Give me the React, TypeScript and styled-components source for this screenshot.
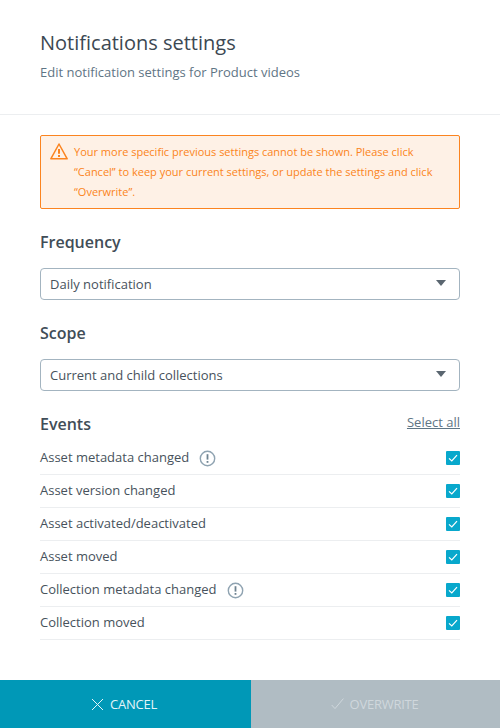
import styled, { createGlobalStyle } from 'styled-components'

const GlobalStyle = createGlobalStyle`
    html, body {
        margin: 0;
        padding: 0;
        background: #fff;
    }
    body {
        font-family: 'Open Sans', 'Liberation Sans', sans-serif;
    }
`

const Page = styled.div`
    width: 500px;
    height: 728px;
    display: flex;
    flex-direction: column;
    overflow: hidden;
`

const Header = styled.header`
    height: 114px;
    box-sizing: content-box;
    padding: 0 40px;
    border-bottom: 1px solid #eceef0;
`

const Title = styled.h1`
    margin: 0;
    padding-top: 29px;
    font-size: 20px;
    line-height: 28px;
    font-weight: 400;
    color: #3c4852;
`

const Subtitle = styled.p`
    margin: 7px 0 0;
    font-size: 13px;
    line-height: 17px;
    color: #5f7585;
`

const Body = styled.main`
    flex: 1;
    padding: 20px 40px 0;
`

const Alert = styled.div`
    display: flex;
    gap: 6px;
    box-sizing: border-box;
    height: 74px;
    padding: 6px 10px 6px 9px;
    background: #fef1e6;
    border: 1px solid #fb8420;
    border-radius: 2px;
    color: #fb8420;
    font-size: 11px;
    line-height: 20px;
`

const AlertIcon = styled.svg`
    flex: none;
    width: 18px;
    height: 18px;
    margin-top: 1px;
`

const SectionLabel = styled.h2<{ $top: number }>`
    margin: ${(p) => p.$top}px 0 0;
    font-size: 16px;
    line-height: 22px;
    font-weight: 600;
    color: #414d57;
`

const Select = styled.div`
    display: flex;
    align-items: center;
    justify-content: space-between;
    box-sizing: border-box;
    height: 32px;
    margin-top: 15px;
    padding: 0 13px 0 9px;
    border: 1px solid #a3b4c0;
    border-radius: 4px;
    font-size: 13px;
    color: #47525c;
`

const Caret = styled.span`
    width: 0;
    height: 0;
    margin-top: -3px;
    border-left: 5px solid transparent;
    border-right: 5px solid transparent;
    border-top: 6px solid #5a6670;
`

const EventsHead = styled.div`
    display: flex;
    justify-content: space-between;
    align-items: flex-start;
    margin-top: 22px;
`

const EventsLabel = styled(SectionLabel)`
    margin: 0;
`

const SelectAll = styled.a`
    font-size: 13px;
    line-height: 20px;
    margin-top: -1px;
    color: #5f7585;
    text-decoration: underline;
`

const EventList = styled.ul`
    list-style: none;
    margin: 7px 0 0;
    padding: 0;
`

const EventRow = styled.li`
    display: flex;
    align-items: center;
    box-sizing: border-box;
    height: 33px;
    border-bottom: 1px solid #eceef0;
    font-size: 13px;
    color: #47525c;
`

const EventName = styled.span`
    margin-top: -2px;
`

const InfoIcon = styled.svg`
    width: 17px;
    height: 17px;
    margin-left: 10px;
`

const Checkbox = styled.span`
    display: flex;
    align-items: center;
    justify-content: center;
    width: 14px;
    height: 14px;
    margin-left: auto;
    background: #08a8cc;
    border-radius: 1px;
`

const Footer = styled.footer`
    display: flex;
    height: 48px;
`

const FooterButton = styled.button<{ $disabled?: boolean }>`
    display: flex;
    align-items: center;
    justify-content: center;
    gap: 6px;
    flex: none;
    width: ${(p) => (p.$disabled ? '249px' : '251px')};
    height: 48px;
    padding: 0 ${(p) => (p.$disabled ? '2px' : '3px')} 0 0;
    border: 0;
    background: ${(p) => (p.$disabled ? '#b0bcc3' : '#0098b7')};
    color: ${(p) => (p.$disabled ? '#cfd7dc' : '#e4f5f9')};
    font-family: inherit;
    font-size: 13px;
    letter-spacing: -0.25px;
`

const Divider = styled.span`
    width: 1px;
    background: #18b0d0;
`

const events = [
    { label: 'Asset metadata changed', info: true },
    { label: 'Asset version changed' },
    { label: 'Asset activated/deactivated' },
    { label: 'Asset moved' },
    { label: 'Collection metadata changed', info: true },
    { label: 'Collection moved' },
]

const App = () => {
    return (
        <Page>
            <GlobalStyle />
            <Header>
                <Title>Notifications settings</Title>
                <Subtitle>Edit notification settings for Product videos</Subtitle>
            </Header>
            <Body>
                <Alert>
                    <AlertIcon viewBox="0 0 18 18" fill="none">
                        <path d="M9 1 L17.2 15.8 H0.8 Z" stroke="#fb8420" strokeWidth="1.5" strokeLinejoin="round" />
                        <path d="M9 6 V10.8" stroke="#fb8420" strokeWidth="2" />
                        <path d="M9 12 V14" stroke="#fb8420" strokeWidth="2" />
                    </AlertIcon>
                    <span>
                        Your more specific previous settings cannot be shown. Please click “Cancel” to keep your current
                        settings, or update the settings and click “Overwrite”.
                    </span>
                </Alert>
                <SectionLabel $top={22}>Frequency</SectionLabel>
                <Select>
                    Daily notification
                    <Caret />
                </Select>
                <SectionLabel $top={22}>Scope</SectionLabel>
                <Select>
                    Current and child collections
                    <Caret />
                </Select>
                <EventsHead>
                    <EventsLabel $top={0}>Events</EventsLabel>
                    <SelectAll>Select all</SelectAll>
                </EventsHead>
                <EventList>
                    {events.map((event) => (
                        <EventRow key={event.label}>
                            <EventName>{event.label}</EventName>
                            {event.info && (
                                <InfoIcon viewBox="0 0 17 17" fill="none">
                                    <circle cx="8.5" cy="8.5" r="7.2" stroke="#8fa3b1" strokeWidth="1.4" />
                                    <path d="M8.5 4.2 V9.6" stroke="#6f8391" strokeWidth="1.8" />
                                    <path d="M8.5 11 V12.8" stroke="#6f8391" strokeWidth="1.8" />
                                </InfoIcon>
                            )}
                            <Checkbox>
                                <svg width="10" height="10" viewBox="0 0 10 10" fill="none">
                                    <path d="M1 5.4 L3.8 8 L9 2.2" stroke="#fff" strokeWidth="1.2" />
                                </svg>
                            </Checkbox>
                        </EventRow>
                    ))}
                </EventList>
            </Body>
            <Footer>
                <FooterButton>
                    <svg width="13" height="13" viewBox="0 0 13 13" fill="none">
                        <path d="M1 1 L12 12 M12 1 L1 12" stroke="#e4f5f9" strokeWidth="1" />
                    </svg>
                    CANCEL
                </FooterButton>
                <Divider />
                <FooterButton $disabled>
                    <svg width="13" height="12" viewBox="0 0 13 12" fill="none">
                        <path d="M0.7 7 L4 10.6 L12.4 0.6" stroke="#cfd7dc" strokeWidth="1" />
                    </svg>
                    OVERWRITE
                </FooterButton>
            </Footer>
        </Page>
    )
}

export default App
